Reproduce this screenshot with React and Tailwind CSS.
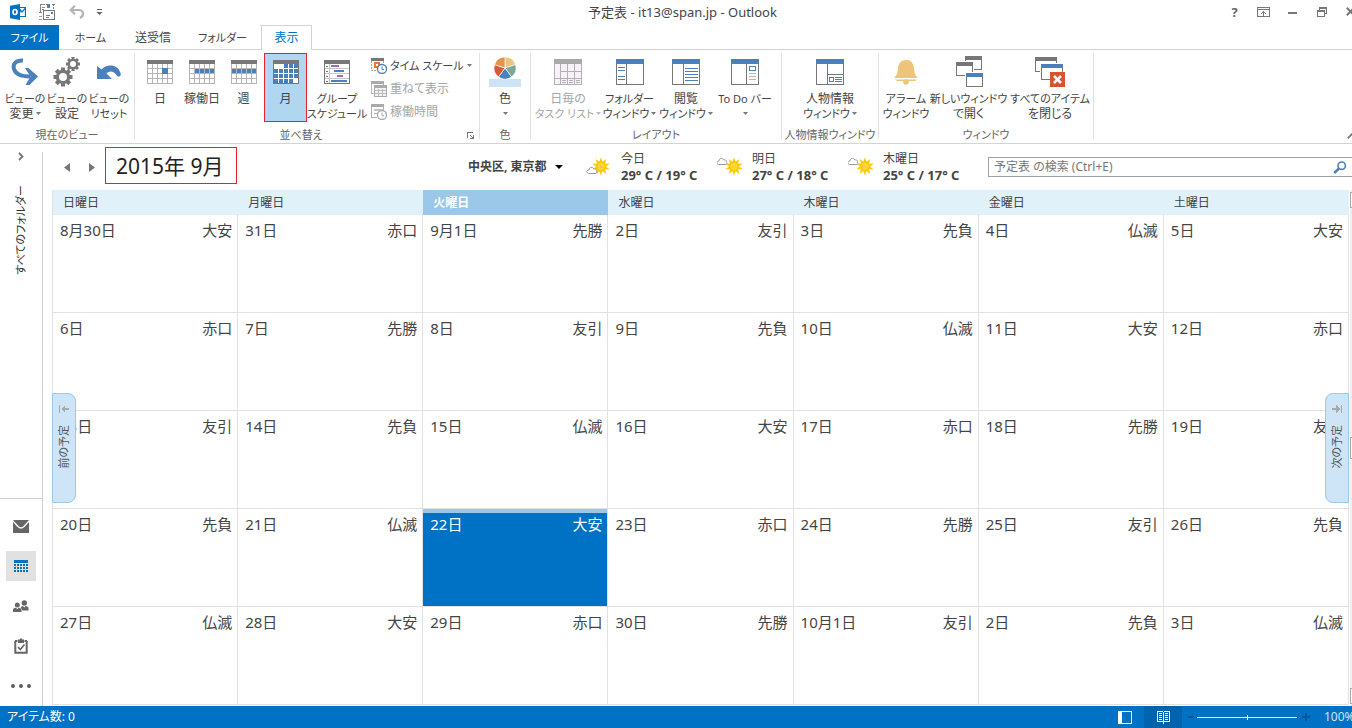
import React from "react";

/* ---------- icons ---------- */

function Svg({ w, h, children, crisp = true, className = "" }) {
  return (
    <svg
      width={w}
      height={h}
      viewBox={`0 0 ${w} ${h}`}
      fill="none"
      shapeRendering={crisp ? "crispEdges" : "auto"}
      className={`shrink-0 ${className}`}
      aria-hidden="true"
    >
      {children}
    </svg>
  );
}

const BLUE = "#4a80bb";
const GRAY = "#777777";

function CalendarIcon({ cells = [], children, dense = false }) {
  return (
    <Svg w={26} h={24}>
      <rect width="26" height="24" fill={dense ? GRAY : "#b5b5b5"} />
      <rect x="1" y="4" width="24" height="19" fill="#fff" />
      {!dense && (
        <path
          d="M5.5 4v19M10.5 4v19M15.5 4v19M20.5 4v19M1 8.5h24M1 13.5h24M1 18.5h24"
          stroke="#b5b5b5"
        />
      )}
      <rect width="26" height="4" fill={GRAY} />
      {cells.map(([c, r]) => (
        <rect key={`${c}-${r}`} x={1 + c * 5} y={4 + r * 5} width="4" height="4" fill={BLUE} />
      ))}
      {children}
    </Svg>
  );
}

const weekCells = [[0, 1], [1, 1], [2, 1], [3, 1], [4, 1]];
const monthCells = [
  [2, 0], [3, 0], [4, 0],
  [0, 1], [1, 1], [2, 1], [3, 1], [4, 1],
  [0, 2], [1, 2], [2, 2], [3, 2], [4, 2],
  [0, 3], [1, 3], [2, 3], [3, 3],
];

const DayIcon = () => (
  <CalendarIcon>
    <rect x="15" y="8" width="6" height="6" fill={BLUE} />
  </CalendarIcon>
);
const WorkWeekIcon = () => <CalendarIcon cells={weekCells.slice(1)} />;
const WeekIcon = () => <CalendarIcon cells={weekCells} />;
const MonthIcon = () => <CalendarIcon cells={monthCells} dense />;

const ScheduleIcon = () => (
  <Svg w={26} h={24}>
    <rect width="26" height="24" fill={GRAY} />
    <path d="M1 4h24v19H1z" fill="#fff" />
    <path d="M5.5 4v19M1 8.5h24M1 13.5h24M1 18.5h24" stroke="#c5c5c5" />
    <path d="M2 6.5h2M2 11.5h2M2 16.5h2M2 21.5h2" stroke={GRAY} />
    <rect x="7" y="5" width="8" height="2" fill="#9a6fb8" />
    <rect x="10" y="10" width="10" height="2" fill={BLUE} />
    <rect x="13" y="15" width="6" height="2" fill="#9a6fb8" />
    <rect x="7" y="20" width="16" height="2" fill={BLUE} />
  </Svg>
);

const ChangeViewIcon = () => (
  <Svg w={28} h={28} crisp={false}>
    <path d="M12 2.5C5 2 1.500 6 3 11c1.500 5 7 7.500 16 7.500" stroke={BLUE} strokeWidth="4" />
    <path d="M14 10l3.500 0 9.500 8.500-8.500 8.500h-4l5-8.500z" fill={BLUE} />
  </Svg>
);

function gear(cx, cy, r, hole, tooth) {
  return (
    <g>
      {[0, 45, 90, 135].map((a) => (
        <rect
          key={a}
          x={cx - tooth / 2}
          y={cy - r}
          width={tooth}
          height={r * 2}
          fill={GRAY}
          transform={`rotate(${a} ${cx} ${cy})`}
        />
      ))}
      <circle cx={cx} cy={cy} r={r * 0.76} fill={GRAY} />
      <circle cx={cx} cy={cy} r={hole} fill="#fff" />
    </g>
  );
}
const GearsIcon = () => (
  <Svg w={28} h={30} crisp={false}>
    {gear(10, 20, 9.5, 4, 4)}
    {gear(20, 7, 7, 3, 3)}
  </Svg>
);

const ResetIcon = () => (
  <Svg w={24} h={16} crisp={false}>
    <path
      d="M0 2l4.500 3.500C9.500-.5 21-.5 23.700 9.500c.5 2.500-2 4-3.700 2.500C17.500 7 12.500 6 9.500 9.500L15 15H0z"
      fill={BLUE}
    />
  </Svg>
);

const ClockBadge = ({ color }) => (
  <g shapeRendering="auto">
    <circle cx="11" cy="11" r="4.500" fill="#fff" stroke={color} strokeWidth="1.300" />
    <path d="M11 8.500V11.500h2" stroke={color} />
  </g>
);
const TimeScaleIcon = () => (
  <Svg w={16} h={16}>
    <rect x="0" y="0" width="13" height="3" fill={GRAY} />
    <path d="M.5 3v10M12.500 3v4M0 12.500h6" stroke="#aaa" strokeDasharray="2 1" />
    <rect x="4" y="5" width="4" height="4" fill="#fff" stroke="#e8792f" strokeWidth="2" />
    <ClockBadge color={BLUE} />
  </Svg>
);
const OverlayIcon = () => (
  <Svg w={16} h={16}>
    <rect x="0" y="0" width="13" height="3" fill="#aaa" />
    <path d="M.5 3v9h3M12.500 3v1" stroke="#bbb" />
    <rect x="3.500" y="5.500" width="12" height="10" fill="#f5f2f6" stroke="#aaa" />
    <rect x="3" y="4" width="13" height="3" fill="#aaa" />
    <path d="M7.500 8v7M11.500 8v7M4 9.500h11M4 12.500h11" stroke="#bbb" />
  </Svg>
);
const WorkHoursIcon = () => (
  <Svg w={16} h={16}>
    <rect x="0" y="0" width="13" height="3" fill="#aaa" />
    <path d="M.5 3v10h5M12.500 3v3M3 9.500h3" stroke="#b0b0b0" />
    <rect x="3" y="5" width="9" height="2" fill="#c4c4c4" />
    <ClockBadge color="#aaaaaa" />
  </Svg>
);

const ColorWheelIcon = () => {
  const colors = ["#ecc47c", "#78aa9b", "#4a80bb", "#d8593c", "#e6934a"];
  const pt = (deg) => {
    const a = ((deg - 90) * Math.PI) / 180;
    return `${(16 + 11 * Math.cos(a)).toFixed(2)} ${(11 + 11 * Math.sin(a)).toFixed(2)}`;
  };
  return (
    <Svg w={32} h={30} crisp={false}>
      <rect x="0" y="22" width="32" height="8" fill="#cde4f7" />
      {colors.map((c, i) => (
        <path
          key={c}
          d={`M16 11L${pt(i * 72)}A11 11 0 0 1 ${pt((i + 1) * 72)}Z`}
          fill={c}
          stroke="#fff"
          strokeWidth="0.700"
        />
      ))}
    </Svg>
  );
};

function PaneIcon({ children }) {
  return (
    <Svg w={28} h={26}>
      <rect x=".5" y=".5" width="27" height="25" fill="#fff" stroke={GRAY} />
      <rect width="28" height="5" fill={BLUE} />
      {children}
    </Svg>
  );
}
const TaskListIcon = () => (
  <Svg w={28} h={26}>
    <rect x=".5" y=".5" width="27" height="25" fill="#f7f2f8" stroke="#b3b0b3" />
    <rect width="28" height="5" fill="#aaa8aa" />
    <path d="M6.500 5v20M13.500 5v20M20.500 5v20M6 12.500h22M0 19.500h28" stroke="#b3b0b3" />
    <path d="M8 21.500h4M8 23.500h4M15 21.500h4M15 23.500h4M22 21.500h4M22 23.500h4" stroke="#b3b0b3" />
  </Svg>
);
const FolderPaneIcon = () => (
  <PaneIcon>
    <path d="M10.500 5v20" stroke={GRAY} />
    <path d="M2 8.500h7M2 11.500h7M2 17.500h7M2 20.500h7" stroke={BLUE} />
  </PaneIcon>
);
const ReadingPaneIcon = () => (
  <PaneIcon>
    <path d="M11.500 5v20" stroke={GRAY} />
    <path d="M13 9.500h13M13 12.500h13M13 15.500h13M13 18.500h13M13 21.500h13" stroke={BLUE} />
  </PaneIcon>
);
const TodoBarIcon = () => (
  <PaneIcon>
    <path d="M15.500 5v20" stroke={GRAY} />
    <rect x="18.500" y="7.500" width="6" height="4" stroke={BLUE} />
    <path d="M18 14.500h7M18 17.500h7M18 20.500h7" stroke="#b5b5b5" />
  </PaneIcon>
);
const PeoplePaneIcon = () => (
  <PaneIcon>
    <path d="M11.500 5v20M12 15.500h16" stroke={GRAY} />
    <rect x="13.500" y="18.500" width="4" height="4" stroke={BLUE} />
    <path d="M19 18.500h7M19 20.500h7M19 22.500h7" stroke={BLUE} />
  </PaneIcon>
);
const BellIcon = () => (
  <Svg w={24} h={26} crisp={false}>
    <path d="M12 1c-5 0-7.500 3-8 8-.4 5-1 7-3.500 9.500v1.500h23v-1.500C21 16 20.400 14 20 9c-.5-5-3-8-8-8z" fill="#eec47a" />
    <path d="M0 19.500h24" stroke="#fff" strokeWidth="1" />
    <path d="M1 20.500h22l-2 1.500H3z" fill="#eec47a" />
    <circle cx="12" cy="23" r="2.800" fill="#eec47a" />
  </Svg>
);
const Win = ({ x, y, w = 17, h = 13, color = GRAY }) => (
  <g>
    <rect x={x - 1} y={y - 1} width={w + 2} height={h + 2} fill="#fff" />
    <rect x={x + 0.5} y={y + 0.5} width={w - 1} height={h - 1} fill="#fff" stroke={GRAY} />
    <rect x={x} y={y} width={w} height="4" fill={color} />
  </g>
);
const NewWindowIcon = () => (
  <Svg w={28} h={32}>
    <Win x={10} y={0} h={14} />
    <Win x={1} y={6} h={14} />
    <Win x={11} y={17} h={14} color={BLUE} />
  </Svg>
);
const CloseAllIcon = () => (
  <Svg w={32} h={32}>
    <Win x={1} y={1} w={22} h={15} />
    <Win x={7} y={8} w={22} h={16} color={BLUE} />
    <rect x="16" y="16" width="15" height="15" fill="#d8532f" />
    <path d="M20 20l7 7M27 20l-7 7" stroke="#fff" strokeWidth="2.500" shapeRendering="auto" />
  </Svg>
);

const OutlookIcon = () => (
  <Svg w={16} h={16} crisp={false}>
    <path d="M9 3.500h6.500v9H9" stroke="#0072c6" strokeWidth="1.200" fill="#fff" />
    <path d="M9.500 9l1-3 1.500 2 3.500-4" stroke="#0072c6" strokeWidth="1.200" />
    <path d="M0 1.800L10 0v16L0 14.200z" fill="#0072c6" />
    <ellipse cx="5" cy="8" rx="2" ry="2.500" stroke="#fff" strokeWidth="1.600" />
  </Svg>
);
const SendReceiveIcon = () => (
  <Svg w={16} h={16}>
    <path d="M1 .5h5M1 .500v8M0 8.500h3M3 3.500h3M3 5.500h2" stroke="#888" />
    <path d="M7 .5h4M14.500 0v2M14.500 3v2M13 .5h3M8 3.500h2" stroke="#777" />
    <path d="M0 12.500h3M0 15.500h3" stroke="#999" />
    <rect x="4.500" y="6.500" width="11" height="9" fill="#fff" stroke="#777" />
    <path d="M7 11.500h4M7 13.500h3" stroke="#777" />
    <rect x="8" y="1" width="3" height="3" fill={BLUE} />
    <rect x="12" y="8" width="2" height="2" fill={BLUE} />
  </Svg>
);
const UndoIcon = () => (
  <Svg w={16} h={14} crisp={false}>
    <path d="M2 5h7.500c5.500 0 6 5.500 1.500 8" stroke="#b5b5b5" strokeWidth="2.200" />
    <path d="M6 .8L1.500 5 6 9.200" stroke="#b5b5b5" strokeWidth="2.200" />
  </Svg>
);
const QuickMenuIcon = () => (
  <Svg w={7} h={8} crisp={false}>
    <path d="M1 1.500h5" stroke="#666" />
    <path d="M.5 4h6l-3 3z" fill="#666" />
  </Svg>
);

const Caret = ({ color = "#777", className = "" }) => (
  <Svg w={5} h={3} crisp={false} className={`inline-block ${className}`}>
    <path d="M0 0h5L2.500 3z" fill={color} />
  </Svg>
);

function SunCloud({ low }) {
  const rays = Array.from({ length: 10 }, (_, i) => i * 36);
  return (
    <Svg w={28} h={20} crisp={false}>
      <g transform={low ? "translate(-3 0)" : "translate(-1 0)"}>
        {rays.map((a) => (
          <path key={a} d="M16.200 5.500L18 .3l1.800 5.200z" fill="#fc0" transform={`rotate(${a} 18 9.500)`} />
        ))}
        <circle cx="18" cy="9.500" r="5" fill="#fdc400" />
        <circle cx="18" cy="9.500" r="3.700" fill="#ffd633" />
      </g>
      <g transform={low ? "translate(0 8)" : "translate(-1 -1)"}>
        <path
          d="M2.500 8.500c-2.500-.5-2-3.500.5-3.500C3 2 7 1.500 7.700 4c2-.8 3.300 1 2.500 2 1.300.8.800 2.500-.5 2.500z"
          fill="#fff"
          stroke="#999"
        />
      </g>
    </Svg>
  );
}

/* ---------- ribbon ---------- */

// Labels with katakana run long, so they are set one step smaller than kanji ones.
const labelSize = (text) => (/[ァ-ヶ]/.test(text) ? "text-[11px]" : "text-[12px]");

function RibbonButton({ icon, lines, width, caret, disabled, active }) {
  const caretColor = disabled ? "#bbb" : "#777";
  return (
    <button
      type="button"
      disabled={disabled}
      className={`flex h-[69px] shrink-0 flex-col items-center pt-[3px] leading-[15px] whitespace-nowrap ${width} ${
        disabled ? "text-[#a6a6a6]" : "text-[#444]"
      } ${active ? "bg-[#b1d6f0] outline outline-1 -outline-offset-1 outline-[#e8202a]" : ""}`}
    >
      <span className="mb-[3px] flex h-8 items-center justify-center">{icon}</span>
      <span className={`h-[15px] ${labelSize(lines[0])}`}>{lines[0]}</span>
      <span className={`flex h-[15px] items-center gap-[2px] ${labelSize(lines[1] ?? "")}`}>
        {lines[1]}
        {caret && <Caret color={caretColor} />}
      </span>
    </button>
  );
}

function RibbonGroup({ label, width, launcher, children }) {
  return (
    <section className={`flex shrink-0 flex-col border-r border-[#e1e1e1] ${width}`} aria-label={label}>
      <div className="flex pl-1">{children}</div>
      <div className="-mb-1 flex flex-1 items-center pt-1 text-[11px] leading-4 whitespace-nowrap text-[#666]">
        <span className="flex-1 text-center">{label}</span>
        {launcher && (
          <button type="button" aria-label="並べ替えの詳細" className="pr-[5px]">
            <Svg w={7} h={7}>
              <path d="M.5 6V.5H6M3 3l3 3M6.500 3v3.500H3" stroke="#777" />
            </Svg>
          </button>
        )}
      </div>
    </section>
  );
}

function SmallButton({ icon, label, disabled, caret }) {
  return (
    <button
      type="button"
      disabled={disabled}
      className={`flex h-[23px] items-center gap-[3px] leading-4 whitespace-nowrap ${labelSize(label)} ${
        disabled ? "text-[#a6a6a6]" : "text-[#444]"
      }`}
    >
      {icon}
      {label}
      {caret && <Caret />}
    </button>
  );
}

function Ribbon() {
  return (
    <div className="flex h-[94px] overflow-hidden border-b border-[#d4d4d4] pt-[3px] pb-1">
      <RibbonGroup label="現在のビュー" width="w-[135px]">
        <RibbonButton icon={<ChangeViewIcon />} lines={["ビューの", "変更"]} caret width="w-[42px]" />
        <RibbonButton icon={<GearsIcon />} lines={["ビューの", "設定"]} width="w-[42px]" />
        <RibbonButton icon={<ResetIcon />} lines={["ビューの", "リセット"]} width="w-[42px]" />
      </RibbonGroup>
      <RibbonGroup label="並べ替え" width="w-[345px]" launcher>
        <RibbonButton icon={<DayIcon />} lines={["日"]} width="w-[42px]" />
        <RibbonButton icon={<WorkWeekIcon />} lines={["稼働日"]} width="w-[42px]" />
        <RibbonButton icon={<WeekIcon />} lines={["週"]} width="w-[41px]" />
        <RibbonButton icon={<MonthIcon />} lines={["月"]} width="w-[43px]" active />
        <RibbonButton icon={<ScheduleIcon />} lines={["グループ", "スケジュール"]} width="w-[60px]" />
        <div className="flex flex-col pt-px pl-1">
          <SmallButton icon={<TimeScaleIcon />} label="タイム スケール" caret />
          <SmallButton icon={<OverlayIcon />} label="重ねて表示" disabled />
          <SmallButton icon={<WorkHoursIcon />} label="稼働時間" disabled />
        </div>
      </RibbonGroup>
      <RibbonGroup label="色" width="w-[51px]">
        <RibbonButton icon={<ColorWheelIcon />} lines={["色", ""]} caret width="w-[42px]" />
      </RibbonGroup>
      <RibbonGroup label="レイアウト" width="w-[251px]">
        <RibbonButton icon={<TaskListIcon />} lines={["日毎の", "タスク リスト"]} caret disabled width="w-[66px]" />
        <RibbonButton icon={<FolderPaneIcon />} lines={["フォルダー", "ウィンドウ"]} caret width="w-[57px]" />
        <RibbonButton icon={<ReadingPaneIcon />} lines={["閲覧", "ウィンドウ"]} caret width="w-[56px]" />
        <RibbonButton icon={<TodoBarIcon />} lines={["To Do バー", ""]} caret width="w-[62px]" />
      </RibbonGroup>
      <RibbonGroup label="人物情報ウィンドウ" width="w-[97px]">
        <RibbonButton icon={<PeoplePaneIcon />} lines={["人物情報", "ウィンドウ"]} caret width="w-[88px]" />
      </RibbonGroup>
      <RibbonGroup label="ウィンドウ" width="w-[215px]">
        <RibbonButton icon={<BellIcon />} lines={["アラーム", "ウィンドウ"]} width="w-[46px]" />
        <RibbonButton icon={<NewWindowIcon />} lines={["新しいウィンドウ", "で開く"]} width="w-[79px]" />
        <RibbonButton icon={<CloseAllIcon />} lines={["すべてのアイテム", "を閉じる"]} width="w-[84px]" />
      </RibbonGroup>
      <button type="button" aria-label="リボンを折りたたむ" className="-mr-1 ml-auto self-end">
        <Svg w={9} h={6} crisp={false}>
          <path d="M.7 5.300l4-4 4 4" stroke="#777" strokeWidth="1.800" />
        </Svg>
      </button>
    </div>
  );
}

/* ---------- header ---------- */

function TitleBar() {
  const tool = "flex h-[23px] w-[29px] items-center justify-center";
  return (
    <header className="-mr-[13px] flex h-[25px] items-start">
      <div className="flex h-[23px] flex-1 items-center">
        <span className="ml-[10px]">
          <OutlookIcon />
        </span>
        <button type="button" aria-label="すべてのフォルダーを送受信" className="ml-[13px]">
          <SendReceiveIcon />
        </button>
        <button type="button" aria-label="元に戻す" className="ml-[14px]">
          <UndoIcon />
        </button>
        <button type="button" aria-label="クイック アクセスのカスタマイズ" className="ml-[11px]">
          <QuickMenuIcon />
        </button>
      </div>
      <h1 className="text-[13px] leading-6 text-[#444]">予定表 - it13@span.jp - Outlook</h1>
      <div className="flex flex-1 justify-end text-[#666]">
        <button type="button" aria-label="ヘルプ" className={`${tool} text-[13px] leading-5 font-bold`}>?</button>
        <button type="button" aria-label="リボンの表示オプション" className={tool}>
          <Svg w={13} h={10}>
            <path d="M.5.5h12v9H.5zM0 2.500h13M6.500 4v5M4 6.500h1M5 5.500h3M8 6.500h1" stroke="#777" />
          </Svg>
        </button>
        <button type="button" aria-label="最小化" className={tool}>
          <Svg w={9} h={4}><rect y="2" width="9" height="2" fill="#777" /></Svg>
        </button>
        <button type="button" aria-label="元に戻す (縮小)" className={tool}>
          <Svg w={10} h={10}>
            <path d="M2.500 3V1h7v5H8" stroke="#777" />
            <path d="M.5 4h7v5.500h-7zM2 .5h8M0 3.500h8" stroke="#777" />
          </Svg>
        </button>
        <button type="button" aria-label="閉じる" className={tool}>
          <Svg w={9} h={9} crisp={false}><path d="M.8.8l7.400 7.400M8.200.8L.8 8.200" stroke="#777" strokeWidth="2" /></Svg>
        </button>
      </div>
    </header>
  );
}

function Tabs() {
  const tab = "flex items-center justify-center border-b border-[#d4d4d4] pt-0.5";
  return (
    <nav className="flex h-[25px] leading-4 whitespace-nowrap text-[#444]">
      <button type="button" className="w-[59px] bg-[#0072c6] text-[11px] text-white">ファイル</button>
      <button type="button" className={`${tab} w-[63px] text-[11px]`}>ホーム</button>
      <button type="button" className={`${tab} w-[62px] text-[12px]`}>送受信</button>
      <button type="button" className={`${tab} w-[77px] text-[11px]`}>フォルダー</button>
      <button type="button" className="w-[51px] border-x border-t border-[#d4d4d4] text-[12px] text-[#0072c6]">表示</button>
      <span className="flex-1 border-b border-[#d4d4d4]" />
    </nav>
  );
}

/* ---------- side bar ---------- */

function SideBar() {
  const item = "flex h-[30px] w-[30px] items-center justify-center";
  return (
    <aside className="mt-2 flex w-[43px] shrink-0 flex-col border-r border-[#d0d0d0]">
      <button type="button" aria-label="フォルダー ウィンドウの展開" className="mx-auto">
        <Svg w={6} h={9} crisp={false}><path d="M1 1l3.500 3.500L1 8" stroke="#777" strokeWidth="1.800" /></Svg>
      </button>
      <button
        type="button"
        className="mx-auto mt-6 rotate-180 text-[11px] leading-4 whitespace-nowrap text-[#333] [text-orientation:sideways] [writing-mode:vertical-rl]"
      >
        すべてのフォルダー
      </button>
      <nav className="mt-auto flex flex-col items-center gap-[10px] border-t border-[#d0d0d0] pt-3 pb-[5px]">
        <button type="button" aria-label="メール" className={item}>
          <Svg w={16} h={13} crisp={false}>
            <rect width="16" height="13" fill="#666" />
            <path d="M-.5.500L5 6.500c2 2 4 2 6 0L16.500.500" stroke="#fff" strokeWidth="1.300" />
          </Svg>
        </button>
        <button type="button" aria-label="予定表" className={`${item} bg-[#e1e1e1]`}>
          <Svg w={14} h={12}>
            <rect width="14" height="12" fill="#0072c6" />
            <path d="M0 3.500h14M0 6.500h14M0 9.500h14M2.500 3v9M5.500 3v9M8.500 3v9M11.500 3v9" stroke="#e1e1e1" />
          </Svg>
        </button>
        <button type="button" aria-label="連絡先" className={item}>
          <Svg w={16} h={13} crisp={false}>
            <circle cx="4.300" cy="5" r="2.500" fill="#666" />
            <path d="M0 12V9.500C.5 8 2.500 7.800 3 7.800l1.300 1.500 1.300-1.500c1 0 2.700.7 2.900 1.700V12z" fill="#666" />
            <circle cx="11.300" cy="3" r="2.700" fill="#666" />
            <path d="M7.700 7.500c.3-1 1.500-1.300 2.300-1.500l1.300 1.500L12.600 6c1 .1 2.900.7 2.900 2V10.500H9.500z" fill="#666" />
          </Svg>
        </button>
        <button type="button" aria-label="タスク" className={item}>
          <Svg w={14} h={16} crisp={false}>
            <path d="M1.300 3v11.700h11.400V3" stroke="#666" strokeWidth="2" />
            <path d="M1 3h2.500M10.500 3H13" stroke="#666" strokeWidth="2" />
            <path d="M4 1.500h1.500L7 0l1.500 1.500H10V5H4z" fill="#666" />
            <path d="M4 9l2.300 2.500L10.500 6.500" stroke="#666" strokeWidth="1.700" />
          </Svg>
        </button>
        <button type="button" aria-label="その他" className={item}>
          <Svg w={20} h={4} crisp={false}>
            <circle cx="2" cy="2" r="1.900" fill="#555" />
            <circle cx="10" cy="2" r="1.900" fill="#555" />
            <circle cx="18" cy="2" r="1.900" fill="#555" />
          </Svg>
        </button>
      </nav>
    </aside>
  );
}

/* ---------- calendar ---------- */

const weekdays = ["日曜日", "月曜日", "火曜日", "水曜日", "木曜日", "金曜日", "土曜日"];
const weeks = [
  [["8月30日", "大安"], ["31日", "赤口"], ["9月1日", "先勝"], ["2日", "友引"], ["3日", "先負"], ["4日", "仏滅"], ["5日", "大安"]],
  [["6日", "赤口"], ["7日", "先勝"], ["8日", "友引"], ["9日", "先負"], ["10日", "仏滅"], ["11日", "大安"], ["12日", "赤口"]],
  [["13日", "友引"], ["14日", "先負"], ["15日", "仏滅"], ["16日", "大安"], ["17日", "赤口"], ["18日", "先勝"], ["19日", "友引"]],
  [["20日", "先負"], ["21日", "仏滅"], ["22日", "大安"], ["23日", "赤口"], ["24日", "先勝"], ["25日", "友引"], ["26日", "先負"]],
  [["27日", "仏滅"], ["28日", "大安"], ["29日", "赤口"], ["30日", "先勝"], ["10月1日", "友引"], ["2日", "先負"], ["3日", "仏滅"]],
];
const forecast = [
  { day: "今日", temp: "29° C / 19° C", low: true },
  { day: "明日", temp: "27° C / 18° C" },
  { day: "木曜日", temp: "25° C / 17° C" },
];

function CalendarHeader() {
  return (
    <div className="flex h-[46px] items-center">
      <div className="flex w-[416px] shrink-0 items-center pl-3">
        <button type="button" aria-label="前の月">
          <Svg w={6} h={9} crisp={false}><path d="M6 0v9L0 4.500z" fill="#777" /></Svg>
        </button>
        <button type="button" aria-label="次の月" className="ml-[19px]">
          <Svg w={6} h={9} crisp={false}><path d="M0 0v9l6-4.500z" fill="#777" /></Svg>
        </button>
        <h2 className="-mt-1 ml-[10px] flex h-[37px] w-[132px] items-center border border-[#e8202a] pt-0.5 pl-[10px] text-[21px] leading-7 whitespace-nowrap text-[#222]">
          2015年 9月
        </h2>
      </div>
      <button type="button" className="flex w-[118px] shrink-0 items-center gap-2 text-[12px] leading-4 font-bold whitespace-nowrap text-[#444]">
        中央区, 東京都
        <Svg w={8} h={4} crisp={false}><path d="M0 0h8L4 4z" fill="#000" /></Svg>
      </button>
      {forecast.map((f) => (
        <div key={f.day} className="flex w-[131px] shrink-0 items-center gap-[7px] leading-4 whitespace-nowrap text-[#444]">
          <SunCloud low={f.low} />
          <div>
            <div className="text-[12px]">{f.day}</div>
            <div className="text-[13px] font-bold">{f.temp}</div>
          </div>
        </div>
      ))}
      <form className="-mr-2 ml-[9px] flex h-5 flex-1 items-center border border-[#a0a0a0] pr-3 pl-[5px]">
        <input
          type="search"
          aria-label="予定表の検索"
          placeholder="予定表 の検索 (Ctrl+E)"
          className="min-w-0 flex-1 text-[12px] leading-4 outline-none placeholder:text-[#777]"
        />
        <button type="button" aria-label="検索">
          <Svg w={14} h={13} crisp={false}>
            <circle cx="8.700" cy="4.700" r="3.700" stroke={BLUE} strokeWidth="1.600" />
            <path d="M6 7.500L1.200 12" stroke={BLUE} strokeWidth="2.400" />
          </Svg>
        </button>
      </form>
    </div>
  );
}

function SideTab({ label, side }) {
  const left = side === "left";
  return (
    <button
      type="button"
      className={`absolute top-[203px] flex h-[110px] w-6 flex-col items-center border border-[#9bc8e8] bg-[#cde5f7] pt-[11px] ${
        left ? "left-0 rounded-r-lg" : "right-0 rounded-l-lg"
      }`}
    >
      <Svg w={10} h={8} className={left ? "" : "-scale-x-100"}>
        <path d="M.5 0v8" stroke="#a9a9a9" />
        <path d="M3 4h7" stroke="#a9a9a9" strokeWidth="2" />
        <path d="M2 4l4-4v8z" fill="#a9a9a9" />
      </Svg>
      <span className="mt-3 rotate-180 text-[11px] leading-4 whitespace-nowrap text-[#555] [text-orientation:sideways] [writing-mode:vertical-rl]">
        {label}
      </span>
    </button>
  );
}

function MonthGrid() {
  return (
    <table className="w-full flex-1 table-fixed border-separate border-spacing-0 border-l border-[#e1e1e1]">
      <thead>
        <tr className="h-[25px]">
          {weekdays.map((d, i) => (
            <th
              key={d}
              scope="col"
              className={`p-0 pl-[10px] text-left text-[12px] leading-4 ${
                i === 2 ? "bg-[#9bc7e9] font-bold text-white" : "bg-[#e0f1fa] font-normal text-[#444]"
              }`}
            >
              {d}
            </th>
          ))}
        </tr>
      </thead>
      <tbody>
        {weeks.map((week, w) => (
          <tr key={w} className="h-[98px]">
            {week.map(([date, rokuyo], d) => {
              const today = w === 3 && d === 2;
              return (
                <td
                  key={date}
                  className={`border-r border-b border-[#e1e1e1] p-0 align-top text-[15px] leading-6 ${
                    today ? "bg-[#0072c6] text-white shadow-[inset_0_4px_0_#9bc7e9]" : "text-[#444]"
                  }`}
                >
                  <div className="flex justify-between pt-[3px] pr-[5px] pl-[7px]">
                    <span>{date}</span>
                    <span>{rokuyo}</span>
                  </div>
                </td>
              );
            })}
          </tr>
        ))}
      </tbody>
    </table>
  );
}

function StatusBar() {
  return (
    <footer className="-mr-2 flex h-[22px] items-center bg-[#0072c6] pl-[7px] text-[12px] leading-4 text-white">
      <span>アイテム数: 0</span>
      <div className="ml-auto flex h-full items-center">
        <button type="button" aria-label="標準表示" className="flex h-full w-[38px] items-center justify-center">
          <Svg w={14} h={13}>
            <path d="M.5.5h13v12H.5z" stroke="#fff" />
            <rect width="4" height="13" fill="#fff" />
          </Svg>
        </button>
        <button type="button" aria-label="閲覧表示" className="flex h-full w-[38px] items-center justify-center bg-[#0063ae]">
          <Svg w={13} h={13}>
            <path d="M.5.500h5l1 1 1-1h5v10h-5l-1 1-1-1h-5zM6.500 1v12M2 2.500h3M2 4.500h3M2 6.500h3M2 8.500h3M8 2.500h3M8 4.500h3M8 6.500h3M8 8.500h3" stroke="#fff" />
          </Svg>
        </button>
        <button type="button" aria-label="縮小" className="ml-1 flex w-[10px] justify-center">
          <Svg w={6} h={2}><rect width="6" height="2" fill="#00559b" /></Svg>
        </button>
        <input
          type="range"
          aria-label="ズーム"
          defaultValue="50"
          className="mx-[1px] h-3 w-[100px] appearance-none bg-transparent bg-[linear-gradient(#fff,#fff)] bg-[length:100%_1px] bg-center bg-no-repeat [&::-webkit-slider-thumb]:h-[5px] [&::-webkit-slider-thumb]:w-px [&::-webkit-slider-thumb]:appearance-none [&::-webkit-slider-thumb]:bg-white"
        />
        <button type="button" aria-label="拡大" className="ml-[3px] flex w-[10px] justify-center">
          <Svg w={8} h={8}><path d="M3 0h2v8H3zM0 3h8v2H0z" fill="#00559b" /></Svg>
        </button>
        <span className="ml-[13px] w-9 text-[#cfe5f5]">100%</span>
      </div>
    </footer>
  );
}

export default function App() {
  return (
    <div className="flex min-h-screen flex-col overflow-hidden bg-white font-['Noto_Sans','Noto_Sans_CJK_JP',sans-serif] [font-feature-settings:'palt']">
      <TitleBar />
      <Tabs />
      <Ribbon />
      <div className="flex flex-1">
        <SideBar />
        <main className="flex min-w-0 flex-1 flex-col pl-[9px]">
          <CalendarHeader />
          <div className="flex flex-1">
            <div className="relative flex min-w-0 flex-1 flex-col pb-px">
              <MonthGrid />
              <SideTab label="前の予定" side="left" />
              <SideTab label="次の予定" side="right" />
            </div>
            <div className="ml-px flex w-[2px] flex-col justify-between bg-[#f0f0f0] py-[2px]" aria-hidden="true">
              <span className="h-4 border border-r-0 border-[#aaa] bg-white" />
              <span className="h-[22px] border border-r-0 border-[#aaa] bg-white" />
              <span className="h-4 border border-r-0 border-[#aaa] bg-white" />
            </div>
          </div>
        </main>
      </div>
      <StatusBar />
    </div>
  );
}
